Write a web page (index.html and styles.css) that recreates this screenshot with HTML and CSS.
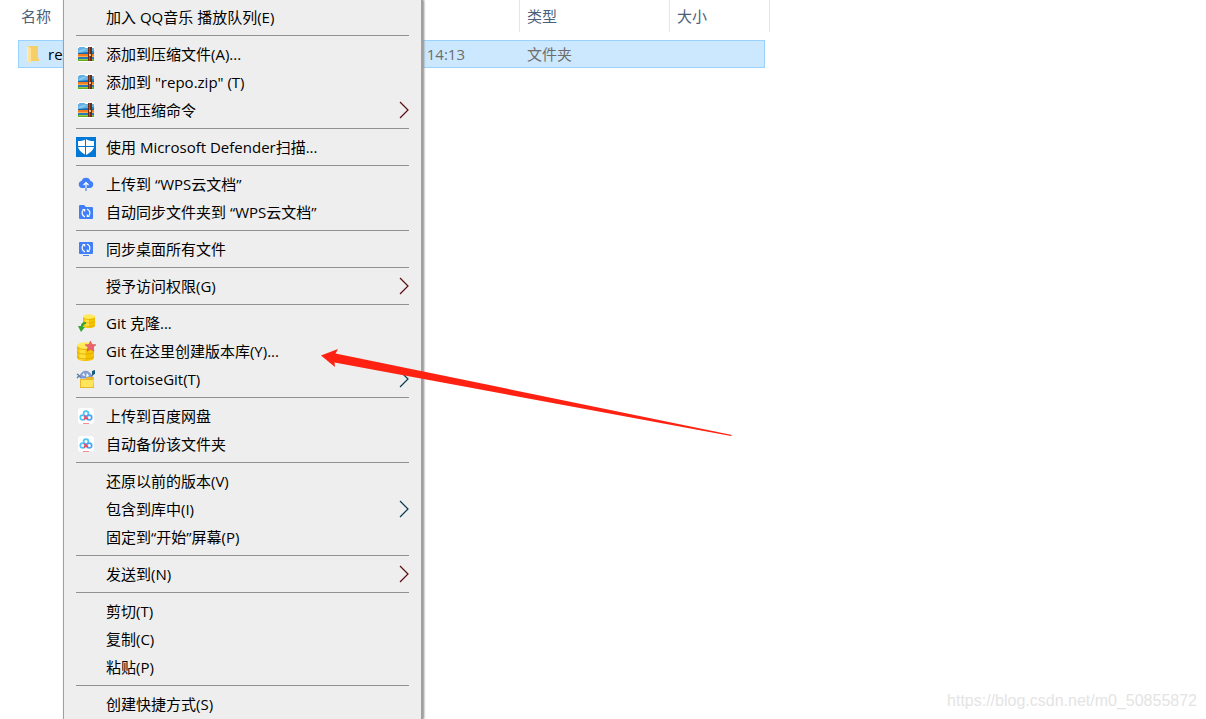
FILE: index.html
```html
<!DOCTYPE html>
<html lang="zh-CN">
  <head>
    <meta charset="UTF-8" />
    <meta name="viewport" content="width=device-width, initial-scale=1.0" />
    <title>repo</title>
    <link rel="stylesheet" href="styles.css" />
  </head>
  <body>
    <svg class="symbols" aria-hidden="true">
      <symbol id="zip" viewBox="0 0 16 16">
        <path fill="#fff" d="M0 0h16v16H0z" />
        <path fill="#247fc0" d="M0 3l2-2h4l1 1h9v6H0z" />
        <path fill="#62b2e6" d="M0 3l2-2h4l1 1h9v3L1 7H0z" />
        <path fill="#8cccf2" d="M1 5l4-2h4L3 6H1z" />
        <path fill="#1767a4" d="M0 7h16v1H0z" />
        <path fill="#f47b20" d="M0 8h16v3H0z" />
        <path fill="#ffae45" d="M0 10h16v1H0z" />
        <path fill="#2b77bd" d="M0 11h16v2H0z" />
        <path fill="#63ac20" d="M0 13h16v2H0z" />
        <path fill="#93cf35" d="M1 13h14v1H1z" />
        <path fill="#6b2b16" d="M10 1h4v14h-4z" />
        <path fill="#a45b35" d="M11 1h1v14h-1z" />
        <path fill="#e5c18a" d="M11 8h2v2h-2z" />
      </symbol>
      <symbol id="chevron" viewBox="0 0 10 18">
        <path fill="none" stroke="currentColor" stroke-width="1.2" d="M1 1l8 8-8 8" />
      </symbol>
      <symbol id="sync" viewBox="0 0 16 16">
        <path fill="none" stroke="#fff" stroke-width="1.2" d="M7 11.800A4 4 0 0 1 5.200 5.200M9 4.200a4 4 0 0 1 1.800 6.600" />
        <path fill="#fff" d="M4 4h3.200v3zM12 12H8.800V9z" />
      </symbol>
      <symbol id="coins" viewBox="0 0 14 16" preserveAspectRatio="none">
        <path fill="#f5c400" d="M0 3v10c0 4 14 4 14 0V3z" />
        <path fill="#ffe03b" d="M2 5h5v10H2z" />
        <ellipse cx="7" cy="3" rx="7" ry="2.7" fill="#ffe95c" />
        <path fill="none" stroke="#e0a800" stroke-width=".7" d="M0 4c0 3 14 3 14 0M0 8c0 3 14 3 14 0M0 12c0 3 14 3 14 0" />
      </symbol>
      <symbol id="baidu" viewBox="0 0 16 16">
        <rect width="16" height="16" rx="3" fill="#fff" />
        <g fill="none" stroke-width="1.7">
          <circle cx="8" cy="5.6" r="2.4" stroke="#4cc4f7" />
          <circle cx="4.7" cy="9.5" r="2.4" stroke="#4cc4f7" />
          <circle cx="11.3" cy="9.5" r="2.4" stroke="#4ba6f7" />
          <path stroke="#f04a65" d="M6.2 7.6c1.5 1 2.5 2.5 3.5 3.8M6 11.5l2-2.4" />
        </g>
        <path fill="#f58a9a" d="M5 15h6v1H5z" />
      </symbol>
    </svg>

    <main class="explorer">
      <table class="files">
        <thead>
          <tr>
            <th>名称</th>
            <th></th>
            <th>类型</th>
            <th>大小</th>
          </tr>
        </thead>
        <tbody>
          <tr>
            <td class="name">
              <svg class="folder" viewBox="0 0 14 18" aria-hidden="true">
                <path fill="#f6cf69" d="M2 1h10v12l1 1v2H3z" />
                <path fill="#ffe399" d="M1 1l4 2v15l-4-2z" />
                <path fill="#ffedb9" d="M1 1l1 1v14l-1-1z" />
              </svg>
              re
            </td>
            <td class="date">14:13</td>
            <td>文件夹</td>
            <td></td>
          </tr>
        </tbody>
      </table>
    </main>

    <nav class="menu">
      <button type="button" class="item"><span class="icon"></span>加入 QQ音乐 播放队列(E)</button>
      <hr />
      <button type="button" class="item">
        <span class="icon"><svg width="16" height="16"><use href="#zip" /></svg></span>添加到压缩文件(A)...
      </button>
      <button type="button" class="item">
        <span class="icon"><svg width="16" height="16"><use href="#zip" /></svg></span>添加到 "repo.zip" (T)
      </button>
      <button type="button" class="item">
        <span class="icon"><svg width="16" height="16"><use href="#zip" /></svg></span>其他压缩命令
        <svg class="chevron"><use href="#chevron" /></svg>
      </button>
      <hr />
      <button type="button" class="item">
        <span class="icon">
          <svg width="20" height="20" viewBox="0 0 20 20">
            <path fill="#0078d7" d="M0 0h20v20H0z" />
            <path fill="#fff" d="M10 2c2 1.5 4 2 8 2v5c0 4-4 7-8 9-4-2-8-5-8-9V4c4 0 6-.5 8-2z" />
            <path stroke="#0078d7" d="M9.500 2v16M2 9.500h16" />
          </svg>
        </span>使用 Microsoft Defender扫描...
      </button>
      <hr />
      <button type="button" class="item">
        <span class="icon">
          <svg width="16" height="16" viewBox="0 0 16 16">
            <path fill="#417ff9" d="M4 12a3.500 3.500 0 0 1-.5-6.900 4.700 4.700 0 0 1 9 0A3.500 3.500 0 0 1 12 12z" />
            <path fill="none" stroke="#fff" stroke-width="1.2" d="M8 12V6.500M5.500 9L8 6.500 10.500 9" />
            <path stroke="#417ff9" stroke-width="1.2" d="M8 12v3" />
          </svg>
        </span>上传到 “WPS云文档”
      </button>
      <button type="button" class="item">
        <span class="icon">
          <svg width="16" height="16" viewBox="0 0 16 16">
            <path fill="#417ff9" d="M1 2q0-1 1-1h4l2 2h6q1 0 1 1v10q0 1-1 1H2q-1 0-1-1z" />
            <use href="#sync" y="1" width="16" height="16" />
          </svg>
        </span>自动同步文件夹到 “WPS云文档”
      </button>
      <hr />
      <button type="button" class="item">
        <span class="icon">
          <svg width="16" height="16" viewBox="0 0 16 16">
            <path fill="#417ff9" d="M1 2q0-1 1-1h12q1 0 1 1v10q0 1-1 1H2q-1 0-1-1zM5 14h6v1H5z" />
            <use href="#sync" y="-1" width="16" height="16" />
          </svg>
        </span>同步桌面所有文件
      </button>
      <hr />
      <button type="button" class="item">
        <span class="icon"></span>授予访问权限(G)
        <svg class="chevron"><use href="#chevron" /></svg>
      </button>
      <hr />
      <button type="button" class="item">
        <span class="icon">
          <svg width="20" height="20" viewBox="0 0 20 20">
            <use href="#coins" x="7" y="1" width="12" height="14" />
            <path fill="#35a632" d="M10 9c-4 0-5 2-5 4H2l3 6 4-5H7c0-2 1-3 3-3z" />
          </svg>
        </span>Git 克隆...
      </button>
      <button type="button" class="item">
        <span class="icon">
          <svg width="20" height="20" viewBox="0 0 20 20">
            <use href="#coins" x="1" y="1" width="17" height="19" />
            <path fill="#e96572" stroke="#cf4657" stroke-width=".5" d="M14.500 0l1.500 3.500 4 .2-3 2.500 1 4-3.500-2-3.500 2 1-4-3-2.500 4-.2z" />
          </svg>
        </span>Git 在这里创建版本库(Y)...
      </button>
      <button type="button" class="item">
        <span class="icon">
          <svg width="20" height="20" viewBox="0 0 20 20">
            <path fill="none" stroke="#587a9d" stroke-width="1.4" d="M5 8L1 5M3 7L1 9M15 8l3-4" />
            <path fill="#83a3de" stroke="#5874a9" stroke-width=".6" d="M4 9c0-9 11-9 12 0z" />
            <path fill="#fff" d="M6 6l2-2 1 3zM11 4l2 3-3 1z" />
            <path fill="#14597e" d="M16 2l3-1v4l-3 1z" />
            <path fill="#eab92a" d="M4 10h5l2-2h7v11H4z" />
            <path fill="#ffe55b" d="M5 11h12l1-1-1 8H5z" />
          </svg>
        </span>TortoiseGit(T)
        <svg class="chevron cool"><use href="#chevron" /></svg>
      </button>
      <hr />
      <button type="button" class="item">
        <span class="icon"><svg width="16" height="16"><use href="#baidu" /></svg></span>上传到百度网盘
      </button>
      <button type="button" class="item">
        <span class="icon"><svg width="16" height="16"><use href="#baidu" /></svg></span>自动备份该文件夹
      </button>
      <hr />
      <button type="button" class="item"><span class="icon"></span>还原以前的版本(V)</button>
      <button type="button" class="item">
        <span class="icon"></span>包含到库中(I)
        <svg class="chevron cool"><use href="#chevron" /></svg>
      </button>
      <button type="button" class="item"><span class="icon"></span>固定到“开始”屏幕(P)</button>
      <hr />
      <button type="button" class="item">
        <span class="icon"></span>发送到(N)
        <svg class="chevron"><use href="#chevron" /></svg>
      </button>
      <hr />
      <button type="button" class="item"><span class="icon"></span>剪切(T)</button>
      <button type="button" class="item"><span class="icon"></span>复制(C)</button>
      <button type="button" class="item"><span class="icon"></span>粘贴(P)</button>
      <hr />
      <button type="button" class="item"><span class="icon"></span>创建快捷方式(S)</button>
    </nav>

    <svg class="pointer" viewBox="0 0 414 90" aria-hidden="true">
      <path fill="#ff2212" d="M1 7.500L18 1l-2.500 4.500L412 87l-1 1L14.500 14.500 15 19z" />
    </svg>

    <span class="watermark">https://blog.csdn.net/m0_50855872</span>
  </body>
</html>
```
FILE: styles.css
```css
*,
*::before,
*::after {
  box-sizing: border-box;
}
body {
  margin: 0;
  min-height: 100vh;
  overflow: hidden;
  background-color: #fff;
  font-family: "Open Sans", "Noto Sans CJK SC", sans-serif;
  font-size: 15px;
  line-height: 20px;
}

.symbols {
  position: absolute;
  width: 0;
  height: 0;
}

/* file list */
.explorer {
  padding-left: 18px;
}

.files {
  display: block;
}

.files thead,
.files tbody {
  display: block;
}

.files tr {
  display: grid;
  grid-template-columns: 300px 201px 150px 96px;
  align-items: center;
  width: max-content;
}

.files thead tr {
  grid-template-columns: 302px 200px 150px 100px;
  height: 32px;
  margin-bottom: 8px;
}

.files th {
  height: 32px;
  padding: 6px 7px;
  border-right: 1px solid #e5e5e5;
  color: #4c607a;
  font-weight: normal;
  text-align: left;
}

.files th:first-child {
  padding-left: 3px;
}

.files tbody tr {
  height: 28px;
  width: 747px;
  border: 1px solid #99d1ff;
  background-color: #cce8ff;
}

.files td {
  padding: 0 7px;
  color: #6d6d6d;
}

.files .name {
  display: flex;
  align-items: center;
  gap: 8px;
  color: #000;
}

.files .date {
  padding-right: 55px;
  text-align: right;
}

.folder {
  width: 14px;
  height: 18px;
}

/* context menu */
.menu {
  position: absolute;
  top: 0;
  left: 63px;
  width: 360px;
  height: 100vh;
  padding: 3px 12px 0;
  overflow: hidden;
  border: solid #a0a0a0;
  border-width: 0 2px 0 1px;
  background-color: #eee;
  box-shadow: 1px 0 2px #888;
}

.menu hr {
  height: 1px;
  margin: 4px 0;
  border: none;
  background-color: #919191;
}

.item {
  display: flex;
  align-items: center;
  width: 100%;
  height: 28px;
  padding: 0;
  border: none;
  background: none;
  color: #000;
  font: inherit;
  white-space: nowrap;
}

.icon {
  display: flex;
  justify-content: center;
  width: 20px;
  margin-right: 10px;
}

.chevron {
  width: 10px;
  height: 18px;
  margin-left: auto;
  color: #5a0c10;
}

.chevron.cool {
  color: #0a3a50;
}

.pointer {
  position: absolute;
  top: 348px;
  left: 320px;
  width: 414px;
  height: 90px;
}

.watermark {
  position: absolute;
  right: 9px;
  bottom: 8px;
  color: #e4e4e4;
  font-family: "Liberation Sans", sans-serif;
  font-size: 16px;
}
```
